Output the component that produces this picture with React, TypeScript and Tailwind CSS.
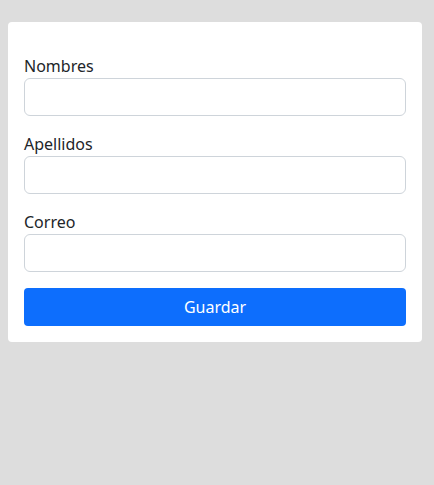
const fields = ["Nombres", "Apellidos", "Correo"];

export default function App() {
  return (
    <div
      className="min-h-[485px] w-full bg-[#dddddd] pt-[22px] pl-2"
      style={{ fontFamily: '"Noto Sans", "Open Sans", sans-serif' }}
    >
      <form
        className="w-[414px] rounded-[4px] bg-white px-4 pt-8 pb-4 text-[#212529]"
        onSubmit={(e) => e.preventDefault()}
      >
        {fields.map((label) => (
          <div key={label} className="mb-4">
            <label className="block text-base leading-6">{label}</label>
            <input
              type="text"
              className="block h-[38px] w-full rounded-[6px] border border-[#ced4da] bg-white px-3 text-base outline-none"
            />
          </div>
        ))}
        <button
          type="submit"
          className="block h-[38px] w-full rounded-[4px] bg-[#0d6efd] text-base text-white"
        >
          Guardar
        </button>
      </form>
    </div>
  );
}
